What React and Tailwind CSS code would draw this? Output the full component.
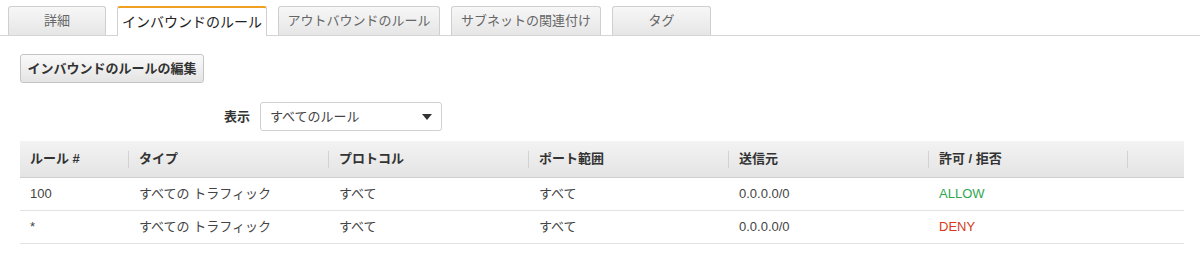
import React from 'react';

const tabs = ['詳細', 'インバウンドのルール', 'アウトバウンドのルール', 'サブネットの関連付け', 'タグ'];
const tabWidths = ['w-[98px]', 'w-[150px]', 'w-[162px]', 'w-[150px]', 'w-[99px]'];

const columns = ['ルール #', 'タイプ', 'プロトコル', 'ポート範囲', '送信元', '許可 / 拒否', ''];

const rows = [
    { rule: '100', type: 'すべての トラフィック', protocol: 'すべて', port: 'すべて', source: '0.0.0.0/0', action: 'ALLOW' },
    { rule: '*', type: 'すべての トラフィック', protocol: 'すべて', port: 'すべて', source: '0.0.0.0/0', action: 'DENY' },
];

const grid = 'grid grid-cols-[108px_200px_200px_200px_200px_199px_57px]';

const App = () => {
    return (
        <div
            className="w-[1200px] h-[269px] bg-white text-[13px] text-[#444] overflow-hidden"
            style={{ fontFamily: '"Liberation Sans", "Noto Sans CJK JP", sans-serif' }}
        >
            {/* tabs */}
            <div className="flex items-end gap-[11px] pt-[6px] pl-[8px] border-b border-[#d5d5d5] h-[36px]">
                {tabs.map((t, i) =>
                    i === 1 ? (
                        <div
                            key={t}
                            className={`${tabWidths[i]} h-[30px] -mb-px bg-white border border-b-0 border-[#d0d0d0] border-t-2 border-t-[#f0a020] rounded-t-[3px] flex items-center justify-center text-[14px] text-[#222]`}
                        >
                            {t}
                        </div>
                    ) : (
                        <div
                            key={t}
                            className={`${tabWidths[i]} h-[29px] bg-gradient-to-b from-[#f7f7f7] to-[#e6e6e6] border border-b-0 border-[#cfcfcf] rounded-t-[3px] flex items-center justify-center text-[13px] text-[#666]`}
                        >
                            {t}
                        </div>
                    )
                )}
            </div>

            {/* edit button */}
            <div className="pl-[20px] pt-[18px]">
                <button className="w-[184px] h-[29px] bg-gradient-to-b from-[#fafafa] to-[#e4e4e4] border border-[#c4c4c4] rounded-[3px] font-bold text-[13px] text-[#333] flex items-center justify-center">
                    インバウンドのルールの編集
                </button>
            </div>

            {/* filter */}
            <div className="flex items-center pt-[19px] pl-[224px] gap-[10px]">
                <span className="font-bold text-[#333]">表示</span>
                <div className="w-[182px] h-[29px] border border-[#d0d0d0] rounded-[3px] flex items-center justify-between pl-[9px] pr-[9px] text-[#444]">
                    <span>すべてのルール</span>
                    <span className="w-0 h-0 border-l-[5px] border-r-[5px] border-t-[6px] border-l-transparent border-r-transparent border-t-[#333]" />
                </div>
            </div>

            {/* table */}
            <div className="ml-[20px] mt-[10px] w-[1164px]">
                <div className={`${grid} h-[37px] bg-gradient-to-b from-[#f3f3f3] to-[#e4e4e4] border-b border-[#cfcfcf] font-bold text-[#333]`}>
                    {columns.map((c, i) => (
                        <div key={i} className="flex items-center">
                            {i > 0 && <span className="w-px h-[17px] bg-[#d2d2d2]" />}
                            <span className="pl-[10px]">{c}</span>
                        </div>
                    ))}
                </div>
                {rows.map((r) => (
                    <div key={r.rule} className={`${grid} h-[33px] border-b border-[#e3e3e3] items-center`}>
                        <span className="pl-[10px]">{r.rule}</span>
                        <span className="pl-[11px]">{r.type}</span>
                        <span className="pl-[11px]">{r.protocol}</span>
                        <span className="pl-[11px]">{r.port}</span>
                        <span className="pl-[11px]">{r.source}</span>
                        <span className={`pl-[11px] ${r.action === 'ALLOW' ? 'text-[#2fa84f]' : 'text-[#d63a1a]'}`}>
                            {r.action}
                        </span>
                        <span />
                    </div>
                ))}
            </div>
        </div>
    );
};

export default App;
